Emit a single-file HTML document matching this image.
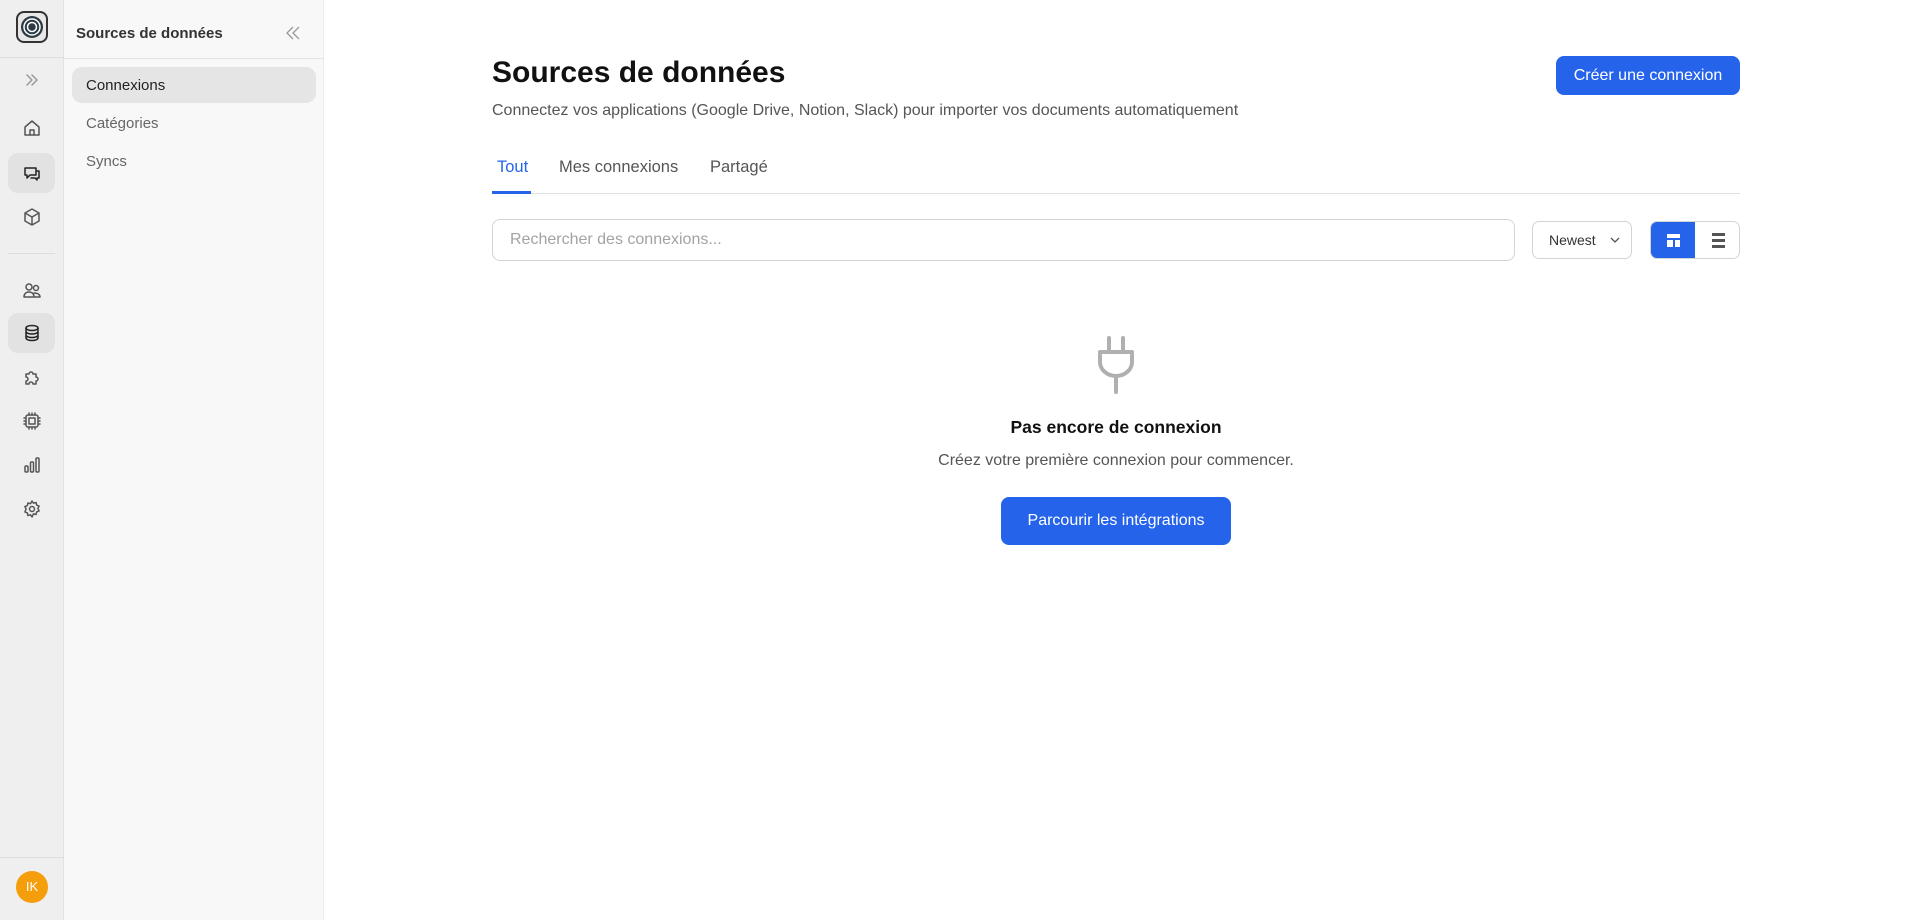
<!DOCTYPE html>
<html><head><meta charset="utf-8"><style>
*{box-sizing:border-box;margin:0;padding:0}
body{width:1908px;height:920px;overflow:hidden;font-family:"Liberation Sans",sans-serif;background:#fff;position:relative}
.rail{position:absolute;left:0;top:0;width:64px;height:920px;background:#efefef;border-right:1px solid #e2e2e2}
.side{position:absolute;left:64px;top:0;width:260px;height:920px;background:#f8f8f8;border-right:1px solid #ececec}
.ic{position:absolute;left:32px;transform:translate(-50%,-50%);width:20px;height:20px}
.ic svg{width:20px;height:20px;fill:none;stroke:#555;stroke-width:1.5;stroke-linecap:round;stroke-linejoin:round}
.hl{position:absolute;left:8px;width:47px;height:40px;background:#e2e2e2;border-radius:10px}
.abs{position:absolute}
</style></head><body>
<div class="rail">
  <div class="abs" style="left:16px;top:11px;width:32px;height:32px;border:2px solid #333;border-radius:8px;background:#e8e8e8">
    <svg width="28" height="28" viewBox="0 0 28 28" style="position:absolute;left:0;top:0"><circle cx="14" cy="14" r="11" fill="#2b3a44"/><circle cx="14" cy="14" r="8" fill="none" stroke="#fff" stroke-width="1.5"/><circle cx="14" cy="14" r="4.5" fill="none" stroke="#fff" stroke-width="1.5"/></svg>
  </div>
  <div class="abs" style="left:0;top:57px;width:64px;height:1px;background:#ddd"></div>
  <div class="ic" style="top:80px"><svg viewBox="0 0 20 20" style="stroke:#999"><path d="M5 5l5 5-5 5M10 5l5 5-5 5"/></svg></div>
  <div class="ic" style="top:128px"><svg viewBox="0 0 20 20"><path d="M3 9l7-6 7 6v8H3z M8 17v-5h4v5"/></svg></div>
  <div class="hl" style="top:153px"></div>
  <div class="ic" style="top:173px"><svg viewBox="0 0 20 20" style="stroke:#222"><path d="M3 5h11v7H8l-3 3v-3H3z M14 8h3v7h-2v2l-2-2H9"/></svg></div>
  <div class="ic" style="top:217px"><svg viewBox="0 0 20 20"><path d="M10 2l7 4v8l-7 4-7-4V6z M3 6l7 4 7-4 M10 10v8"/></svg></div>
  <div class="abs" style="left:8px;top:253px;width:47px;height:1px;background:#ddd"></div>
  <div class="ic" style="top:290px"><svg viewBox="0 0 20 20"><circle cx="7" cy="7" r="3"/><circle cx="14" cy="8" r="2.5"/><path d="M2 17c0-4 3-5 5-5s5 1 5 5z M12 13c3 0 6 1 6 4h-5"/></svg></div>
  <div class="hl" style="top:313px"></div>
  <div class="ic" style="top:333px"><svg viewBox="0 0 20 20" style="stroke:#222"><ellipse cx="10" cy="5" rx="6" ry="2.5"/><path d="M4 5v10c0 1.4 2.7 2.5 6 2.5s6-1.1 6-2.5V5 M4 8.5c0 1.4 2.7 2.5 6 2.5s6-1.1 6-2.5 M4 12c0 1.4 2.7 2.5 6 2.5s6-1.1 6-2.5"/></svg></div>
  <div class="ic" style="top:377px"><svg viewBox="0 0 20 20"><path d="M4 7h3a2 2 0 1 1 4 0h3v3a2 2 0 1 1 0 4v3h-3a2 2 0 1 0-4 0H4v-3a2 2 0 1 0 0-4z"/></svg></div>
  <div class="ic" style="top:421px"><svg viewBox="0 0 20 20"><rect x="4" y="4" width="12" height="12" rx="2"/><rect x="7" y="7" width="6" height="6"/><path d="M7 2v2M10 2v2M13 2v2M7 16v2M10 16v2M13 16v2M2 7h2M2 10h2M2 13h2M16 7h2M16 10h2M16 13h2"/></svg></div>
  <div class="ic" style="top:465px"><svg viewBox="0 0 20 20"><rect x="3" y="11" width="3" height="6" rx="1"/><rect x="8.5" y="7" width="3" height="10" rx="1"/><rect x="14" y="3" width="3" height="14" rx="1"/></svg></div>
  <div class="ic" style="top:509px"><svg viewBox="0 0 20 20"><circle cx="10" cy="10" r="2.5"/><path d="M10 2l1.5 2.2 2.6-.7.5 2.6 2.5 1-1.2 2.4 1.2 2.4-2.5 1-.5 2.6-2.6-.7L10 18l-1.5-2.2-2.6.7-.5-2.6-2.5-1L4.1 10 2.9 7.6l2.5-1 .5-2.6 2.6.7z"/></svg></div>
  <div class="abs" style="left:0;top:857px;width:64px;height:1px;background:#ddd"></div>
  <div class="abs" style="left:16px;top:871px;width:32px;height:32px;border-radius:50%;background:#f59e0b;color:#fff;font-size:13px;text-align:center;line-height:32px">IK</div>
</div>
<div class="side">
  <div class="abs" style="left:12px;top:25px;font-size:15px;font-weight:bold;color:#333">Sources de données</div>
  <svg class="abs" style="left:220px;top:24px" width="18" height="18" viewBox="0 0 18 18" fill="none" stroke="#999" stroke-width="1.3"><path d="M9 3L3 9l6 6M15 3L9 9l6 6"/></svg>
  <div class="abs" style="left:0;top:58px;width:260px;height:1px;background:#e2e2e2"></div>
  <div class="abs" style="left:8px;top:67px;width:244px;height:36px;background:#e5e5e5;border-radius:10px"></div>
  <div class="abs" style="left:22px;top:77px;font-size:15px;color:#222">Connexions</div>
  <div class="abs" style="left:22px;top:115px;font-size:15px;color:#666">Catégories</div>
  <div class="abs" style="left:22px;top:153px;font-size:15px;color:#666">Syncs</div>
</div>
<div class="abs" style="left:492px;top:56px;font-size:30px;font-weight:bold;color:#111">Sources de données</div>
<div class="abs" style="left:492px;top:102px;font-size:16px;color:#555">Connectez vos applications (Google Drive, Notion, Slack) pour importer vos documents automatiquement</div>
<div class="abs" style="left:1556px;top:56px;width:184px;height:39px;background:#2563eb;border-radius:8px;color:#fff;font-size:16px;text-align:center;line-height:39px">Créer une connexion</div>
<div class="abs" style="left:497px;top:158px;font-size:16.5px;color:#2563eb">Tout</div>
<div class="abs" style="left:559px;top:158px;font-size:16.5px;color:#555">Mes connexions</div>
<div class="abs" style="left:710px;top:158px;font-size:16.5px;color:#555">Partagé</div>
<div class="abs" style="left:492px;top:193px;width:1248px;height:1px;background:#e2e2e2"></div>
<div class="abs" style="left:492px;top:191px;width:39px;height:3px;background:#2563eb"></div>
<div class="abs" style="left:492px;top:219px;width:1023px;height:42px;border:1px solid #d4d4d4;border-radius:8px;padding-left:17px;line-height:40px;font-size:16px;color:#a3a3a3">Rechercher des connexions...</div>
<div class="abs" style="left:1532px;top:221px;width:100px;height:38px;border:1px solid #d4d4d4;border-radius:7px;font-size:14px;color:#333;line-height:36px;padding-left:16px">Newest<svg style="position:absolute;left:77px;top:14px" width="10" height="8" viewBox="0 0 10 8" fill="none" stroke="#555" stroke-width="1.3"><path d="M1 2l4 4 4-4"/></svg></div>
<div class="abs" style="left:1650px;top:221px;width:90px;height:38px;border:1px solid #d4d4d4;border-radius:7px;overflow:hidden">
  <div class="abs" style="left:0;top:0;width:44px;height:38px;background:#2563eb"></div>
  <div class="abs" style="left:16px;top:12px;width:13px;height:4px;background:#fff"></div>
  <div class="abs" style="left:16px;top:18px;width:6px;height:7px;background:#fff"></div>
  <div class="abs" style="left:24px;top:18px;width:5px;height:7px;background:#fff"></div>
  <div class="abs" style="left:61px;top:11px;width:13px;height:3px;background:#555"></div>
  <div class="abs" style="left:61px;top:17px;width:13px;height:3px;background:#555"></div>
  <div class="abs" style="left:61px;top:23px;width:13px;height:3px;background:#555"></div>
</div>
<svg class="abs" style="left:1096px;top:336px" width="40" height="58" viewBox="0 0 40 58" fill="none" stroke="#b0b0b0" stroke-width="4" stroke-linecap="round" stroke-linejoin="round"><path d="M13 2v14M27 2v14M4 16h32v10a16 14 0 0 1-32 0z M20 40v16"/></svg>
<div class="abs" style="left:324px;width:1584px;top:417px;text-align:center;font-size:17.5px;font-weight:bold;color:#111">Pas encore de connexion</div>
<div class="abs" style="left:324px;width:1584px;top:452px;text-align:center;font-size:16px;color:#555">Créez votre première connexion pour commencer.</div>
<div class="abs" style="left:1001px;top:497px;width:230px;height:48px;background:#2563eb;border-radius:8px;color:#fff;font-size:16px;text-align:center;line-height:48px">Parcourir les intégrations</div>
</body></html>
